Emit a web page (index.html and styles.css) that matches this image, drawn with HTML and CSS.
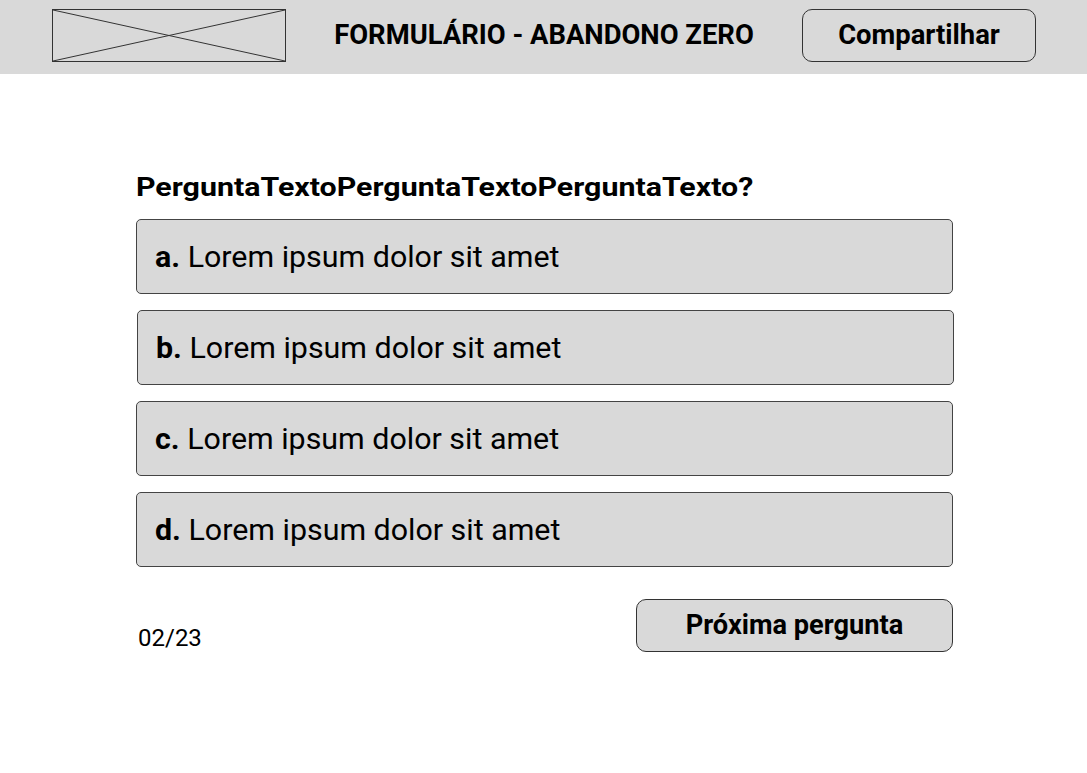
FILE: index.html
```html
<!DOCTYPE html>
<html lang="pt">
<head>
<meta charset="utf-8">
<title>Formulário - Abandono Zero</title>
<link rel="stylesheet" href="styles.css">
</head>
<body>
<header class="topbar">
  <div class="logo">
    <svg class="logo-x" viewBox="0 0 234 53" preserveAspectRatio="none">
      <line x1="0" y1="0" x2="234" y2="53"/>
      <line x1="0" y1="53" x2="234" y2="0"/>
    </svg>
  </div>
  <h1 class="title">FORMULÁRIO - ABANDONO ZERO</h1>
  <button class="share">Compartilhar</button>
</header>
<main class="content">
  <h2 class="question"><span class="question-text">PerguntaTextoPerguntaTextoPerguntaTexto?</span></h2>
  <div class="options">
    <div class="option"><b>a.</b> Lorem ipsum dolor sit amet</div>
    <div class="option option-b"><b>b.</b> Lorem ipsum dolor sit amet</div>
    <div class="option"><b>c.</b> Lorem ipsum dolor sit amet</div>
    <div class="option"><b>d.</b> Lorem ipsum dolor sit amet</div>
  </div>
  <div class="footer">
    <span class="counter">02/23</span>
    <button class="next">Próxima pergunta</button>
  </div>
</main>
</body>
</html>
```
FILE: styles.css
```css
* { box-sizing: border-box; }
body {
  margin: 0;
  background: #ffffff;
  font-family: Roboto, "Liberation Sans", sans-serif;
  color: #000;
}
.topbar {
  height: 74px;
  background: #d9d9d9;
  display: flex;
  align-items: flex-start;
  padding: 9px 51px 0 52px;
}
.logo {
  width: 234px;
  height: 53px;
  border: 1px solid #333;
}
.logo-x {
  display: block;
  width: 100%;
  height: 100%;
}
.logo-x line {
  stroke: #333;
  stroke-width: 1;
  vector-effect: non-scaling-stroke;
}
.title {
  flex: 1;
  margin: 0;
  text-align: center;
  font-size: 27.4px;
  font-weight: 700;
  line-height: 53px;
}
.share {
  width: 234px;
  height: 53px;
  border: 1px solid #333;
  border-radius: 10px;
  background: #d9d9d9;
  font-family: inherit;
  font-size: 27.4px;
  font-weight: 700;
  color: #000;
  padding: 0 0 2px;
}
.content {
  width: 818px;
  margin: 0 0 0 136px;
  padding-top: 99px;
}
.question {
  margin: 0 0 16px;
  font-size: 25px;
  font-weight: 700;
  line-height: 30px;
  white-space: nowrap;
}
.question-text {
  display: inline-block;
  transform: scaleX(1.214);
  transform-origin: left center;
}
.options {
  display: flex;
  flex-direction: column;
  gap: 16px;
}
.option {
  height: 75px;
  width: 817px;
  background: #d9d9d9;
  border: 1px solid #444;
  border-radius: 5px;
  display: flex;
  align-items: center;
  padding-left: 18px;
  font-size: 30.4px;
  white-space: pre;
}
.option b { font-weight: 700; }
.option-b { margin-left: 1px; }
.footer {
  margin-top: 32px;
  width: 817px;
  display: flex;
  justify-content: space-between;
  align-items: flex-start;
}
.counter {
  font-size: 24px;
  line-height: 28px;
  margin: 25px 0 0 2px;
}
.next {
  width: 317px;
  height: 53px;
  border: 1px solid #333;
  border-radius: 10px;
  background: #d9d9d9;
  font-family: inherit;
  font-size: 27.2px;
  font-weight: 700;
  color: #000;
  padding: 0 0 1px;
}
```
